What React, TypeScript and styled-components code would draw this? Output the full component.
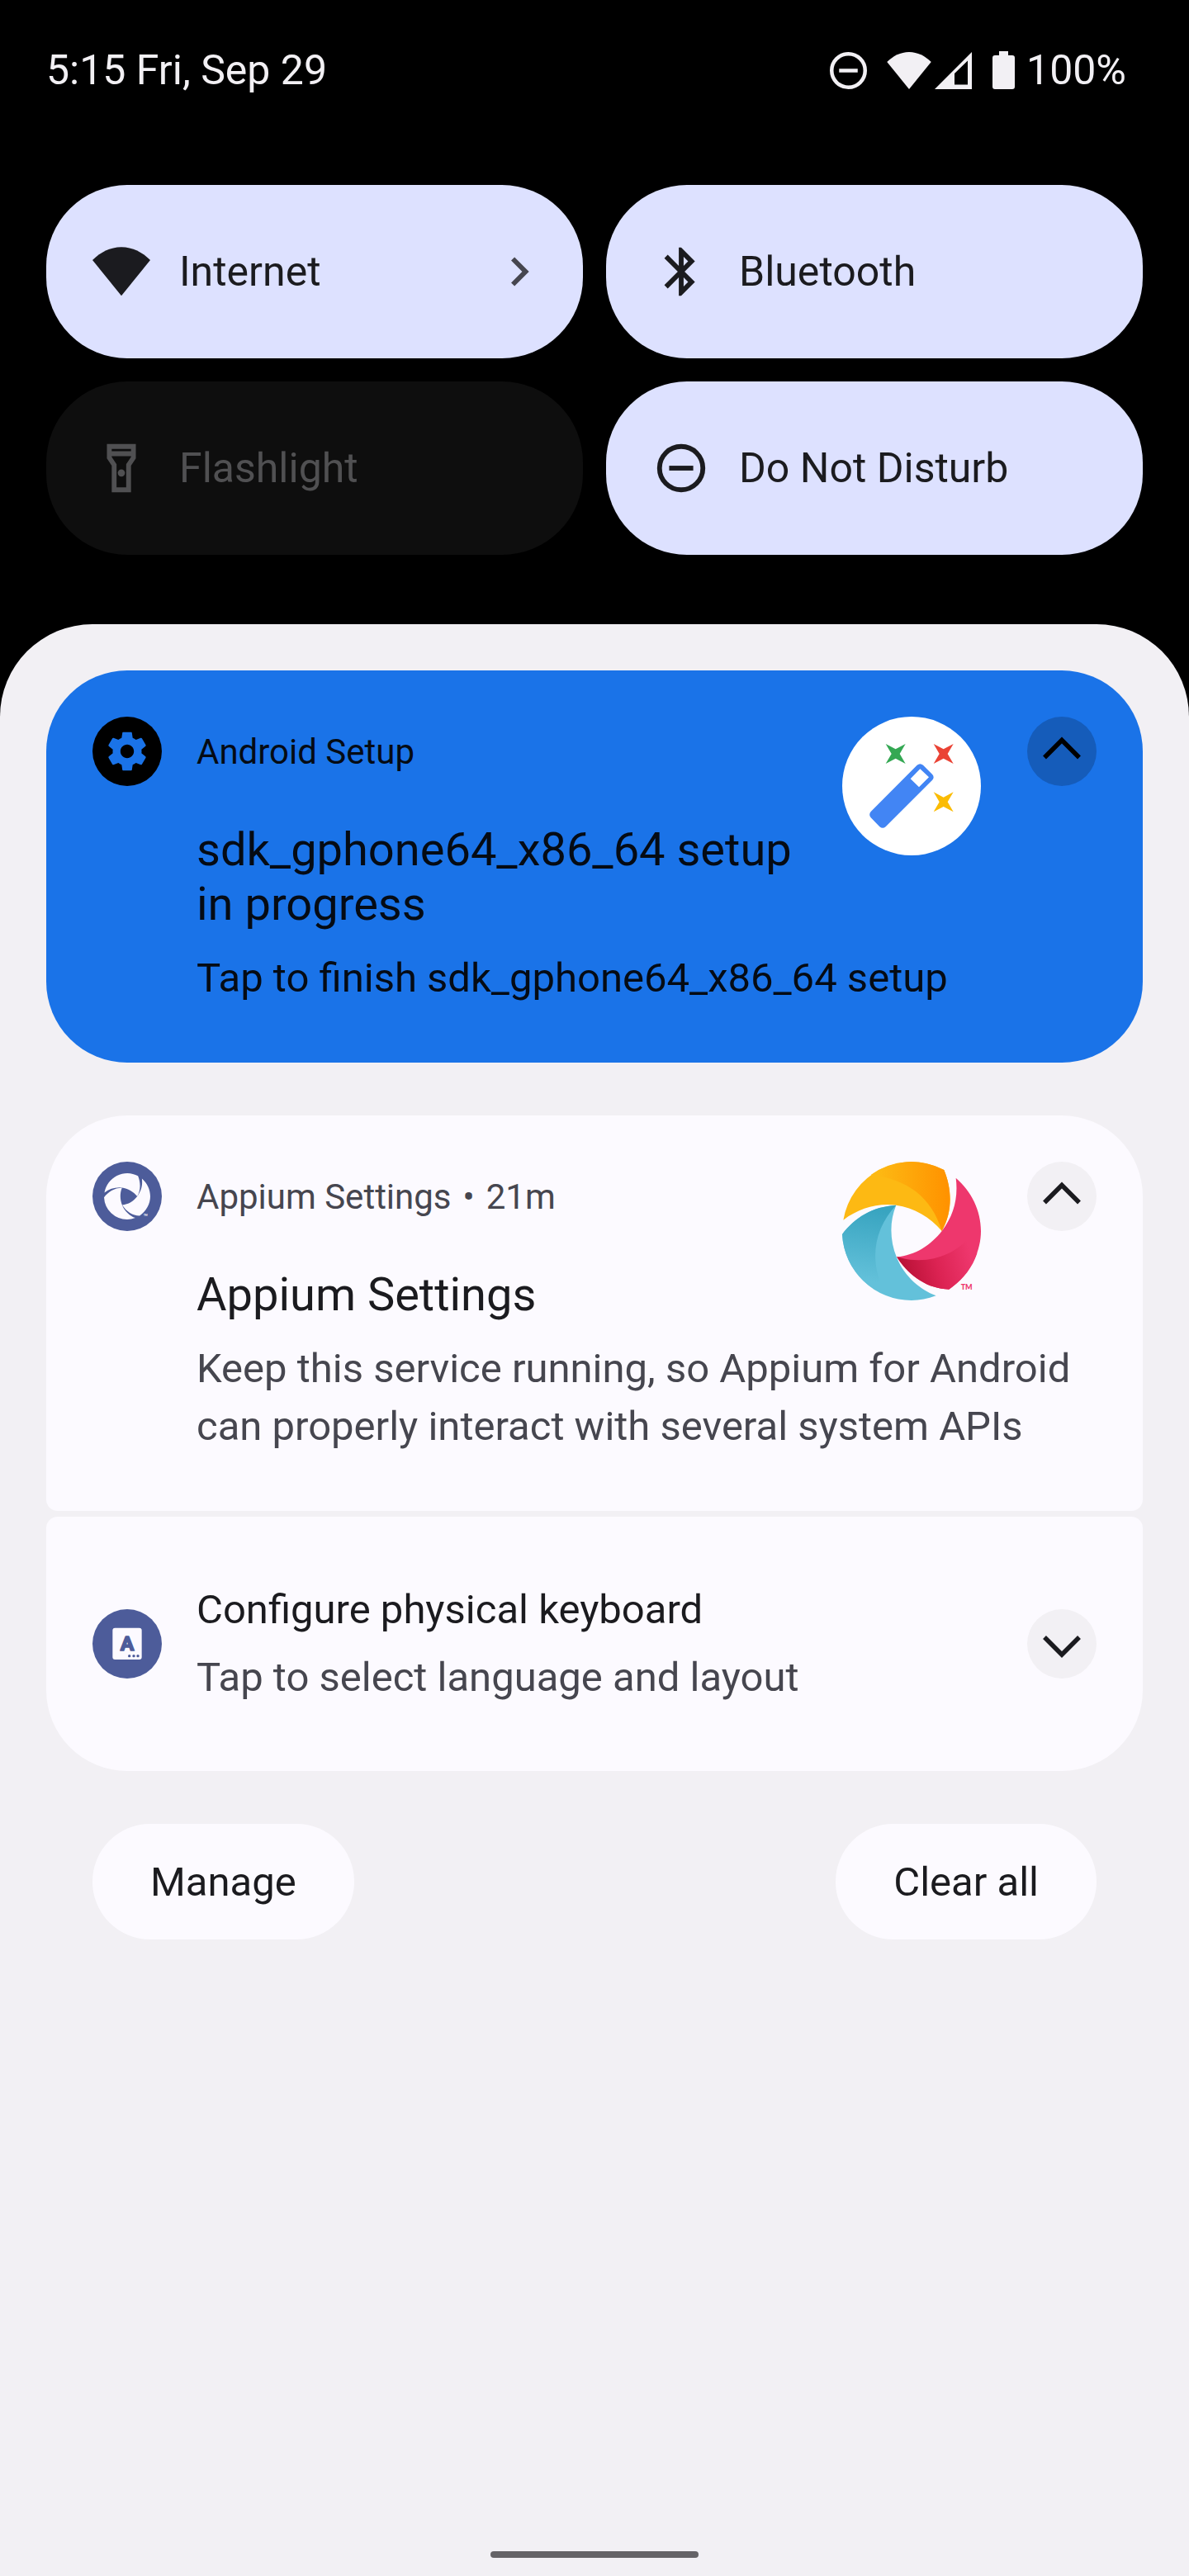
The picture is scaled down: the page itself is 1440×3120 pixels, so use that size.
import React from 'react';
import styled, { createGlobalStyle } from 'styled-components';

const color = {
  ink: '#1b1b1f',
  inkSoft: '#46464f',
  panel: '#f2f0f4',
  card: '#fcfaff',
  tileOn: '#dde1ff',
  tileOff: '#0e0e0e',
  tileOffInk: '#505052',
  badge: '#4d5c9a',
  blue: '#1a73e8',
};

const GlobalStyle = createGlobalStyle`
  *, *::before, *::after { box-sizing: border-box; }
  body {
    margin: 0;
    background: #000;
    font-family: Roboto, "Noto Sans", sans-serif;
    color: ${color.ink};
  }
  h2, p { margin: 0; font-weight: 400; }
  button {
    border: 0;
    padding: 0;
    font: inherit;
    color: inherit;
    background: none;
    cursor: pointer;
  }
  svg { display: block; flex: none; }
`;

const Shade = styled.div`
  display: flex;
  flex-direction: column;
  min-height: 100vh;
`;

const StatusBar = styled.header`
  display: flex;
  align-items: center;
  justify-content: space-between;
  height: 170px;
  padding: 0 76px 0 56px;
  color: ${color.panel};
  font-size: 50px;
`;

const StatusIcons = styled.div`
  display: flex;
  align-items: center;
  gap: 24px;
`;

const IconPair = styled.div<{ $gap: number }>`
  display: flex;
  align-items: center;
  gap: ${(p) => p.$gap}px;
`;

const QuickSettings = styled.section`
  display: grid;
  grid-template-columns: 1fr 1fr;
  gap: 28px;
  padding: 54px 56px 84px;
`;

const Tile = styled.button<{ $on: boolean }>`
  display: flex;
  align-items: center;
  gap: 35px;
  height: 210px;
  padding: 0 42px 0 56px;
  border-radius: 98px;
  font-size: 50px;
  text-align: left;
  background: ${(p) => (p.$on ? color.tileOn : color.tileOff)};
  color: ${(p) => (p.$on ? color.ink : color.tileOffInk)};
`;

const TileLabel = styled.span`
  flex: 1;
`;

const Panel = styled.main`
  flex: 1;
  display: flex;
  flex-direction: column;
  padding: 56px 56px 22px;
  border-radius: 112px 112px 0 0;
  background: ${color.panel};
`;

const Group = styled.section`
  display: flex;
  flex-direction: column;
  gap: 7px;
  margin-bottom: 64px;
  border-radius: 98px;
  overflow: hidden;
`;

const Card = styled.article<{ $tone?: 'blue' }>`
  display: grid;
  grid-template-columns: 84px 1fr auto 84px;
  align-items: start;
  column-gap: 42px;
  padding: 56px 56px 67px;
  border-radius: 14px;
  background: ${(p) => (p.$tone === 'blue' ? color.blue : color.card)};
  --title: ${(p) => (p.$tone === 'blue' ? '#050b14' : color.ink)};
  --soft: ${(p) => (p.$tone === 'blue' ? '#050b14' : color.inkSoft)};
`;

const CompactCard = styled.article`
  display: flex;
  align-items: center;
  gap: 42px;
  padding: 78px 56px;
  border-radius: 14px;
  background: ${color.card};
`;

const CompactText = styled.div`
  flex: 1;
  display: flex;
  flex-direction: column;
  gap: 12px;
`;

const AppName = styled.p`
  display: flex;
  gap: 14px;
  font-size: 42px;
  line-height: 86px;
  color: var(--soft);
`;

const Artwork = styled.div`
  grid-column: 3;
  grid-row: 1 / span 2;
  margin-right: 14px;
`;

const Title = styled.h2`
  grid-column: 2;
  grid-row: 2;
  margin-top: 42px;
  font-size: 56px;
  line-height: 66px;
  color: var(--title);
`;

const Message = styled.p`
  grid-column: 2 / -1;
  margin-top: 22px;
  font-size: 49px;
  line-height: 70px;
  color: var(--soft);
`;

const Line = styled.p<{ $soft?: boolean }>`
  font-size: 49px;
  line-height: 70px;
  color: ${(p) => (p.$soft ? color.inkSoft : color.ink)};
`;

const Expand = styled.button<{ $tone?: 'blue' }>`
  grid-column: 4;
  grid-row: 1;
  width: 84px;
  height: 84px;
  border-radius: 50%;
  background: ${(p) => (p.$tone === 'blue' ? '#155cba' : color.panel)};
  color: ${(p) => (p.$tone === 'blue' ? '#000' : color.ink)};
`;

const Actions = styled.div`
  display: flex;
  justify-content: space-between;
  padding: 0 56px;
`;

const Pill = styled.button`
  height: 140px;
  padding: 0 70px;
  border-radius: 70px;
  background: ${color.card};
  font-size: 49px;
`;

const HomeHandle = styled.div`
  width: 252px;
  height: 8px;
  margin: auto auto 0;
  border-radius: 4px;
  background: #656367;
`;

const MinusCircle = ({ size, crop }: { size: number; crop?: boolean }) => (
  <svg width={size} height={size} viewBox={crop ? '2 2 20 20' : '0 0 24 24'} fill="none" stroke="currentColor" strokeWidth="2" aria-hidden="true">
    <circle cx="12" cy="12" r="9" />
    <path d="M7 12h10" />
  </svg>
);

const wifiPath = 'M12 22L24 7.2C20.8 4 16.6 1.8 12 1.8S3.2 4 0 7.2z';

const TileIcon = ({ children }: { children: React.ReactNode }) => (
  <svg width="70" height="70" viewBox="0 0 24 24" fill="currentColor" aria-hidden="true">
    {children}
  </svg>
);

const Chevron = ({ down }: { down?: boolean }) => (
  <svg width="84" height="84" viewBox="0 0 84 84" fill="none" stroke="currentColor" strokeWidth="5.5" aria-hidden="true">
    <path d={down ? 'M21 34L42 55L63 34' : 'M21 49.5L42 28.5L63 49.5'} />
  </svg>
);

const GearBadge = () => (
  <svg width="84" height="84" viewBox="-6 -6 36 36" aria-hidden="true">
    <circle cx="12" cy="12" r="18" fill="#000" />
    <path
      fill={color.blue}
      d="M19.43 12.98c.04-.32.07-.64.07-.98s-.03-.66-.07-.98l2.11-1.65c.19-.15.24-.42.12-.64l-2-3.46c-.12-.22-.39-.3-.61-.22l-2.49 1c-.52-.4-1.08-.73-1.69-.98l-.38-2.65C14.46 2.18 14.25 2 14 2h-4c-.25 0-.46.18-.49.42l-.38 2.65c-.61.25-1.17.59-1.69.98l-2.49-1c-.23-.09-.49 0-.61.22l-2 3.46c-.13.22-.07.49.12.64l2.11 1.65c-.04.32-.07.65-.07.98s.03.66.07.98l-2.11 1.65c-.19.15-.24.42-.12.64l2 3.46c.12.22.39.3.61.22l2.49-1c.52.4 1.08.73 1.69.98l.38 2.65c.03.24.24.42.49.42h4c.25 0 .46-.18.49-.42l.38-2.65c.61-.25 1.17-.59 1.69-.98l2.49 1c.23.09.49 0 .61-.22l2-3.46c.12-.22.07-.49-.12-.64l-2.11-1.65zM12 15.5c-1.93 0-3.5-1.57-3.5-3.5s1.57-3.5 3.5-3.5 3.5 1.57 3.5 3.5-1.57 3.5-3.5 3.5z"
    />
  </svg>
);

const spark = 'M-36-36L0-17 36-36 15 0 36 36 0 17-36 36-15 0z';

const WandArt = () => (
  <svg width="168" height="168" viewBox="180 144 504 504" aria-hidden="true">
    <circle cx="432" cy="396" r="252" fill="#fff" />
    <path fill="#34a853" transform="translate(374 279)" d={spark} />
    <path fill="#ea4335" transform="translate(548 279)" d={spark} />
    <path fill="#fbbc04" transform="translate(548 454)" d={spark} />
    <path
      fill="#4285f4"
      fillRule="evenodd"
      d="M452 320Q463 311 474 320L507 353Q517 364 507 375L338 544Q327 553 316 544L284 511Q275 500 284 489zM463 334L428 370 459 400 495 364z"
    />
  </svg>
);

const blades = {
  top: 'M184 329A252 252 0 0 1 550 147C578 215 583 295 542 369C500 319 440 283 376 275C305 267 240 287 184 329z',
  right: 'M593 176C650 225 684 295 684 369C684 450 640 530 568 581C490 578 425 535 378 463C445 458 502 420 542 369C585 312 602 250 593 176z',
  left: 'M376 275C352 332 352 402 378 465C405 532 462 582 521 604C490 616 462 621 432 621A252 252 0 0 1 180 381C225 320 290 280 376 275z',
};

const AppiumArt = () => (
  <svg width="168" height="168" viewBox="180 117 504 504" aria-hidden="true">
    <defs>
      <linearGradient id="amber" gradientUnits="userSpaceOnUse" x1="310" y1="0" x2="560" y2="0">
        <stop offset="0" stopColor="#fdb913" />
        <stop offset="1" stopColor="#ff9300" />
      </linearGradient>
      <linearGradient id="crimson" gradientUnits="userSpaceOnUse" x1="395" y1="500" x2="640" y2="430">
        <stop offset="0" stopColor="#b91136" />
        <stop offset="0.5" stopColor="#dc2353" />
        <stop offset="1" stopColor="#ee376d" />
      </linearGradient>
      <linearGradient id="teal" gradientUnits="userSpaceOnUse" x1="310" y1="290" x2="270" y2="550">
        <stop offset="0" stopColor="#38a4c0" />
        <stop offset="1" stopColor="#63c1da" />
      </linearGradient>
    </defs>
    <path fill="#fdb913" d={blades.top} />
    <path fill="url(#amber)" d="M542 369C505 245 415 180 284 165A252 252 0 0 1 550 147C578 215 583 295 542 369z" />
    <path fill="#ee376d" d={blades.right} />
    <path fill="url(#crimson)" d="M378 463C480 493 590 465 655 375L670 450C650 510 610 553 568 581C490 578 425 535 378 463z" />
    <path fill="#63c1da" d={blades.left} />
    <path fill="url(#teal)" d="M376 275C300 355 275 470 330 580L300 583A252 252 0 0 1 180 381C225 320 290 280 376 275z" />
    <text x="611" y="583" fontFamily="Lato, sans-serif" fontWeight="900" fontSize="27" fill="#ee376d">TM</text>
  </svg>
);

const AppiumBadge = () => (
  <svg width="84" height="84" viewBox="54 -9 756 756" aria-hidden="true">
    <circle cx="432" cy="369" r="378" fill={color.badge} />
    <g fill={color.card}>
      <path d={blades.top} />
      <path d={blades.right} />
      <path d={blades.left} />
      <text x="611" y="583" fontFamily="Lato, sans-serif" fontWeight="900" fontSize="27">TM</text>
    </g>
  </svg>
);

const KeyboardBadge = () => (
  <svg width="84" height="84" viewBox="36 30 252 252" aria-hidden="true">
    <circle cx="162" cy="156" r="126" fill={color.badge} />
    <rect x="109" y="98" width="106" height="115" rx="9" fill={color.card} />
    <g fill={color.badge}>
      <text x="162" y="181" textAnchor="middle" fontSize="74" fontWeight="700" stroke={color.badge} strokeWidth="5" strokeLinejoin="round">A</text>
      <circle cx="170" cy="200" r="5" />
      <circle cx="186" cy="200" r="5" />
      <circle cx="201" cy="200" r="5" />
    </g>
  </svg>
);

export default function App() {
  return (
    <>
      <GlobalStyle />
      <Shade>
        <StatusBar>
          <span>5:15 Fri, Sep 29</span>
          <StatusIcons>
            <MinusCircle size={45} crop />
            <IconPair $gap={4}>
              <svg width="54" height="45" viewBox="0 1.8 24 20.2" fill="currentColor" aria-hidden="true">
                <path d={wifiPath} />
              </svg>
              <svg width="46" height="45" viewBox="0 0 46 45" fill="currentColor" aria-hidden="true">
                <path fillRule="evenodd" d="M0 45L45 0V45zM24 39.5H40V10.5L24 26z" />
              </svg>
            </IconPair>
            <IconPair $gap={14}>
              <svg width="27" height="46" viewBox="0 0 27 46" fill="currentColor" aria-hidden="true">
                <path d="M8 0H19V5H24Q27 5 27 8V43Q27 46 24 46H3Q0 46 0 43V8Q0 5 3 5H8z" />
              </svg>
              <span>100%</span>
            </IconPair>
          </StatusIcons>
        </StatusBar>

        <QuickSettings aria-label="Quick settings">
          <Tile $on>
            <TileIcon>
              <path d={wifiPath} />
            </TileIcon>
            <TileLabel>Internet</TileLabel>
            <svg width="70" height="70" viewBox="0 0 24 24" fill={color.inkSoft} aria-hidden="true">
              <path d="M10 6L8.59 7.41 13.17 12l-4.58 4.59L10 18l6-6z" />
            </svg>
          </Tile>
          <Tile $on>
            <TileIcon>
              <path d="M17.71 7.71L12 2h-1v7.59L6.41 5 5 6.41 10.59 12 5 17.59 6.41 19 11 14.41V22h1l5.71-5.71-4.3-4.29 4.3-4.29zM13 5.83l1.88 1.88L13 9.59V5.83zm1.88 10.46L13 18.17v-3.76l1.88 1.88z" />
            </TileIcon>
            <TileLabel>Bluetooth</TileLabel>
          </Tile>
          <Tile $on={false}>
            <TileIcon>
              <path d="M18 2H6v6l2 3v11h8V11l2-3V2zm-2 2v1H8V4h8zm-2 6.4V20h-4v-9.61l-2-3V7h8v.39L14 10.4z" />
              <circle cx="12" cy="14" r="1.5" />
            </TileIcon>
            <TileLabel>Flashlight</TileLabel>
          </Tile>
          <Tile $on>
            <MinusCircle size={70} />
            <TileLabel>Do Not Disturb</TileLabel>
          </Tile>
        </QuickSettings>

        <Panel>
          <Group>
            <Card $tone="blue">
              <GearBadge />
              <AppName>Android Setup</AppName>
              <Artwork>
                <WandArt />
              </Artwork>
              <Expand $tone="blue" aria-label="Collapse Android Setup">
                <Chevron />
              </Expand>
              <Title>sdk_gphone64_x86_64 setup in progress</Title>
              <Message>Tap to finish sdk_gphone64_x86_64 setup</Message>
            </Card>
          </Group>

          <Group>
            <Card>
              <AppiumBadge />
              <AppName>
                <span>Appium Settings</span>
                <span>•</span>
                <span>21m</span>
              </AppName>
              <Artwork>
                <AppiumArt />
              </Artwork>
              <Expand aria-label="Collapse Appium Settings">
                <Chevron />
              </Expand>
              <Title>Appium Settings</Title>
              <Message>Keep this service running, so Appium for Android can properly interact with several system APIs</Message>
            </Card>
            <CompactCard>
              <KeyboardBadge />
              <CompactText>
                <Line>Configure physical keyboard</Line>
                <Line $soft>Tap to select language and layout</Line>
              </CompactText>
              <Expand aria-label="Expand keyboard notification">
                <Chevron down />
              </Expand>
            </CompactCard>
          </Group>

          <Actions>
            <Pill>Manage</Pill>
            <Pill>Clear all</Pill>
          </Actions>
          <HomeHandle />
        </Panel>
      </Shade>
    </>
  );
}
